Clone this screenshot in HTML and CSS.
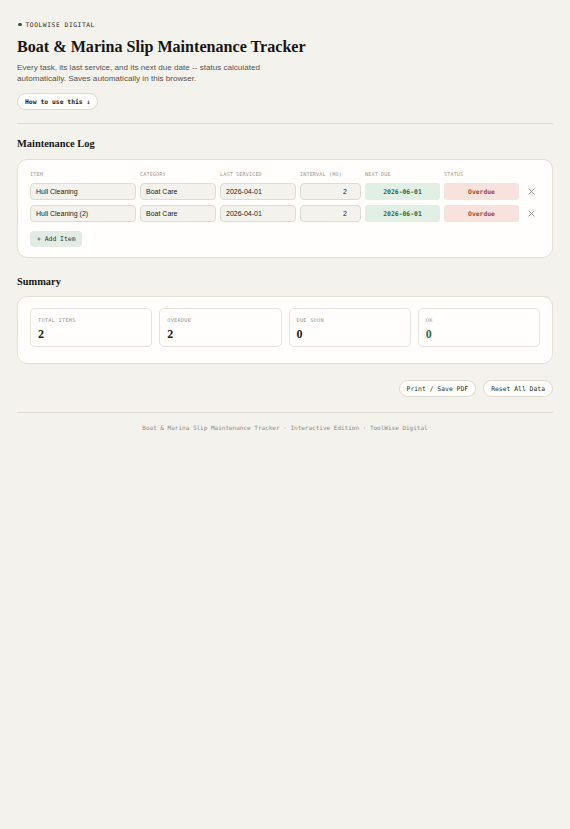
FILE: index.html
```html
<!DOCTYPE html>
<html lang="en">
<head>
<meta charset="utf-8">
<title>Boat &amp; Marina Slip Maintenance Tracker</title>
<link rel="stylesheet" href="styles.css">
</head>
<body>
<div class="page">
  <div class="eyebrow"><span class="dot"></span>TOOLWISE DIGITAL</div>
  <h1 class="title">Boat &amp; Marina Slip Maintenance Tracker</h1>
  <p class="subtitle">Every task, its last service, and its next due date -- status calculated automatically. Saves automatically in this browser.</p>
  <button class="pill pill-bold">How to use this ↓</button>
  <hr class="rule">

  <h2 class="section-title">Maintenance Log</h2>
  <div class="card log-card">
    <div class="log-grid log-head">
      <span>ITEM</span><span>CATEGORY</span><span>LAST SERVICED</span><span>INTERVAL (MO)</span><span>NEXT DUE</span><span>STATUS</span><span></span>
    </div>
    <div class="log-grid log-row">
      <div class="field">Hull Cleaning</div>
      <div class="field">Boat Care</div>
      <div class="field">2026-04-01</div>
      <div class="field num">2</div>
      <div class="due">2026-06-01</div>
      <div class="status overdue">Overdue</div>
      <button class="remove" aria-label="Remove"><svg viewBox="0 0 10 10" width="7" height="7"><path d="M1 1L9 9M9 1L1 9" stroke="#8a8a85" stroke-width="1.2" fill="none"/></svg></button>
    </div>
    <div class="log-grid log-row">
      <div class="field">Hull Cleaning (2)</div>
      <div class="field">Boat Care</div>
      <div class="field">2026-04-01</div>
      <div class="field num">2</div>
      <div class="due">2026-06-01</div>
      <div class="status overdue">Overdue</div>
      <button class="remove" aria-label="Remove"><svg viewBox="0 0 10 10" width="7" height="7"><path d="M1 1L9 9M9 1L1 9" stroke="#8a8a85" stroke-width="1.2" fill="none"/></svg></button>
    </div>
    <button class="add-btn">+ Add Item</button>
  </div>

  <h2 class="section-title summary-title">Summary</h2>
  <div class="card summary-card">
    <div class="stats">
      <div class="stat"><div class="stat-label">TOTAL ITEMS</div><div class="stat-value">2</div></div>
      <div class="stat"><div class="stat-label">OVERDUE</div><div class="stat-value">2</div></div>
      <div class="stat"><div class="stat-label">DUE SOON</div><div class="stat-value">0</div></div>
      <div class="stat"><div class="stat-label">OK</div><div class="stat-value ok">0</div></div>
    </div>
  </div>

  <div class="actions">
    <button class="pill">Print / Save PDF</button>
    <button class="pill">Reset All Data</button>
  </div>
  <hr class="rule footer-rule">
  <footer class="footer">Boat &amp; Marina Slip Maintenance Tracker · Interactive Edition · ToolWise Digital</footer>
</div>
</body>
</html>
```
FILE: styles.css
```css
* { box-sizing: border-box; }
html, body { margin: 0; padding: 0; }
body {
  background: #f4f2ed;
  color: #1c1c1a;
  font-family: "Liberation Sans", Arial, sans-serif;
}
.page {
  padding: 20px 17px 40px;
}
.eyebrow {
  display: flex;
  align-items: center;
  gap: 4px;
  font-family: "DejaVu Sans Mono", "Liberation Mono", monospace;
  font-size: 6.3px;
  letter-spacing: 0.55px;
  line-height: 9px;
  color: #2b2b28;
}
.dot {
  width: 3.5px;
  height: 3.5px;
  border-radius: 50%;
  background: #2e5a44;
  margin-left: 1px;
}
.title {
  font-family: "Liberation Serif", "Times New Roman", serif;
  font-weight: 700;
  font-size: 16.1px;
  line-height: 19px;
  margin: 8px 0 0;
  color: #161614;
}
.subtitle {
  margin: 6px 0 0;
  max-width: 256px;
  font-size: 8.1px;
  line-height: 11px;
  color: #55534e;
}
.pill {
  display: inline-flex;
  align-items: center;
  height: 17px;
  padding: 0 7px;
  border: 1px solid #dedad1;
  border-radius: 9px;
  background: #fffefb;
  font-family: "DejaVu Sans Mono", "Liberation Mono", monospace;
  font-size: 6.4px;
  color: #2c2c29;
  cursor: pointer;
}
.subtitle + .pill { margin-top: 9px; }
.pill-bold { font-weight: 700; color: #1c1c1a; }
.rule {
  border: 0;
  border-top: 1px solid #e2ded5;
  margin: 13px 0 0;
}
.section-title {
  font-family: "Liberation Serif", "Times New Roman", serif;
  font-weight: 700;
  font-size: 10.4px;
  line-height: 12px;
  margin: 14px 0 9px;
  color: #161614;
}
.card {
  background: #fffefc;
  border: 1.5px solid #e4e0d6;
  border-radius: 10px;
}
.log-card {
  padding: 10px 12px 10px;
}
.log-grid {
  display: grid;
  grid-template-columns: 106px 76px 76px 61px 75px 75px 1fr;
  column-gap: 4px;
  align-items: center;
}
.log-head {
  font-family: "DejaVu Sans Mono", "Liberation Mono", monospace;
  font-size: 5.1px;
  letter-spacing: 0.15px;
  color: #9a978f;
  line-height: 8px;
  margin-bottom: 5px;
}
.log-row { margin-bottom: 5px; }
.field {
  height: 17px;
  display: flex;
  align-items: center;
  padding: 0 5px;
  background: #f4f2ec;
  border: 1px solid #dfdbd1;
  border-radius: 4px;
  font-size: 7px;
  color: #222;
}
.field.num { justify-content: flex-end; padding-right: 13px; }
.due, .status {
  height: 17px;
  display: flex;
  align-items: center;
  justify-content: center;
  border-radius: 3px;
  font-family: "DejaVu Sans Mono", "Liberation Mono", monospace;
  font-weight: 700;
  font-size: 6.4px;
}
.due { background: #e1efe4; color: #2f6947; }
.status.overdue { background: #f7e2dd; color: #a1473b; }
.remove {
  border: 0;
  background: none;
  padding: 0;
  display: flex;
  align-items: center;
  justify-content: center;
  height: 16px;
  cursor: pointer;
}
.add-btn {
  margin-top: 2px;
  height: 16px;
  padding: 0 7px;
  border: 0;
  border-radius: 4px;
  background: #e2ebe5;
  font-family: "DejaVu Sans Mono", "Liberation Mono", monospace;
  font-size: 6.4px;
  color: #25402f;
  cursor: pointer;
}
.summary-title { margin-top: 18px; margin-bottom: 8px; }
.summary-card { padding: 11px 12px 16px; }
.stats {
  display: grid;
  grid-template-columns: repeat(4, 1fr);
  gap: 7px;
}
.stat {
  height: 39px;
  border: 1px solid #e6e3dc;
  border-radius: 5px;
  padding: 7px 7px 0;
  background: #fffefc;
}
.stat-label {
  font-family: "DejaVu Sans Mono", "Liberation Mono", monospace;
  font-size: 5.2px;
  letter-spacing: 0.3px;
  color: #9a978f;
  line-height: 8px;
}
.stat-value {
  font-family: "Liberation Serif", "Times New Roman", serif;
  font-weight: 700;
  font-size: 12px;
  line-height: 14px;
  margin-top: 3px;
  color: #1c1c1a;
}
.stat-value.ok { color: #2f6947; }
.actions {
  display: flex;
  justify-content: flex-end;
  gap: 7px;
  margin-top: 16px;
}
.footer-rule { margin-top: 15px; }
.footer {
  text-align: center;
  font-family: "DejaVu Sans Mono", "Liberation Mono", monospace;
  font-size: 6px;
  color: #8f8c85;
  margin-top: 11px;
  line-height: 8px;
}
```
